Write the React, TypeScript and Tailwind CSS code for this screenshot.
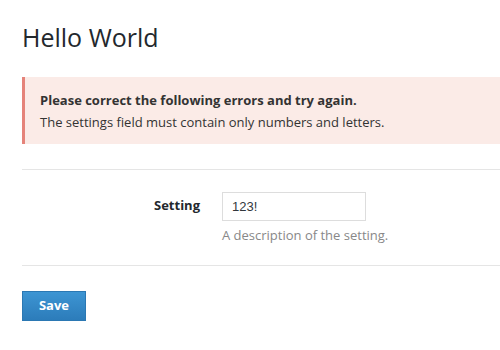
export default function App() {
  return (
    <div className="min-h-[350px] bg-white pl-[22px] font-['Open_Sans',sans-serif] text-[13px] text-[#333]">
      <h1 className="pt-[20px] text-[25px] leading-[34px] font-normal text-[#23282d]">Hello World</h1>

      <div className="mt-[23px] border-l-[3px] border-[#e5837a] bg-[#fbebe7] pt-[12px] pb-[11px] pl-[15px] leading-[22px]">
        <p className="font-bold">Please correct the following errors and try again.</p>
        <p>The settings field must contain only numbers and letters.</p>
      </div>

      <div className="mt-[25px] border-t border-[#e5e5e5]">
        <div className="flex pt-[22px] pb-[19px]">
          <div className="w-[178px] pt-[4px] text-right font-bold text-[#23282d]">Setting</div>
          <div className="ml-[22px]">
            <input
              defaultValue="123!"
              className="h-[29px] w-[144px] border border-[#dddddd] px-[9px] font-['Liberation_Sans',sans-serif] text-[13px] text-[#32373c] outline-none"
            />
            <p className="mt-[5px] text-[#888]">A description of the setting.</p>
          </div>
        </div>
      </div>

      <div className="border-t border-[#e5e5e5] pt-[25px]">
        <button className="h-[30px] w-[64px] border border-[#2b78b3] bg-gradient-to-b from-[#3d95d3] to-[#2c7cba] font-bold text-white">
          Save
        </button>
      </div>
    </div>
  );
}
